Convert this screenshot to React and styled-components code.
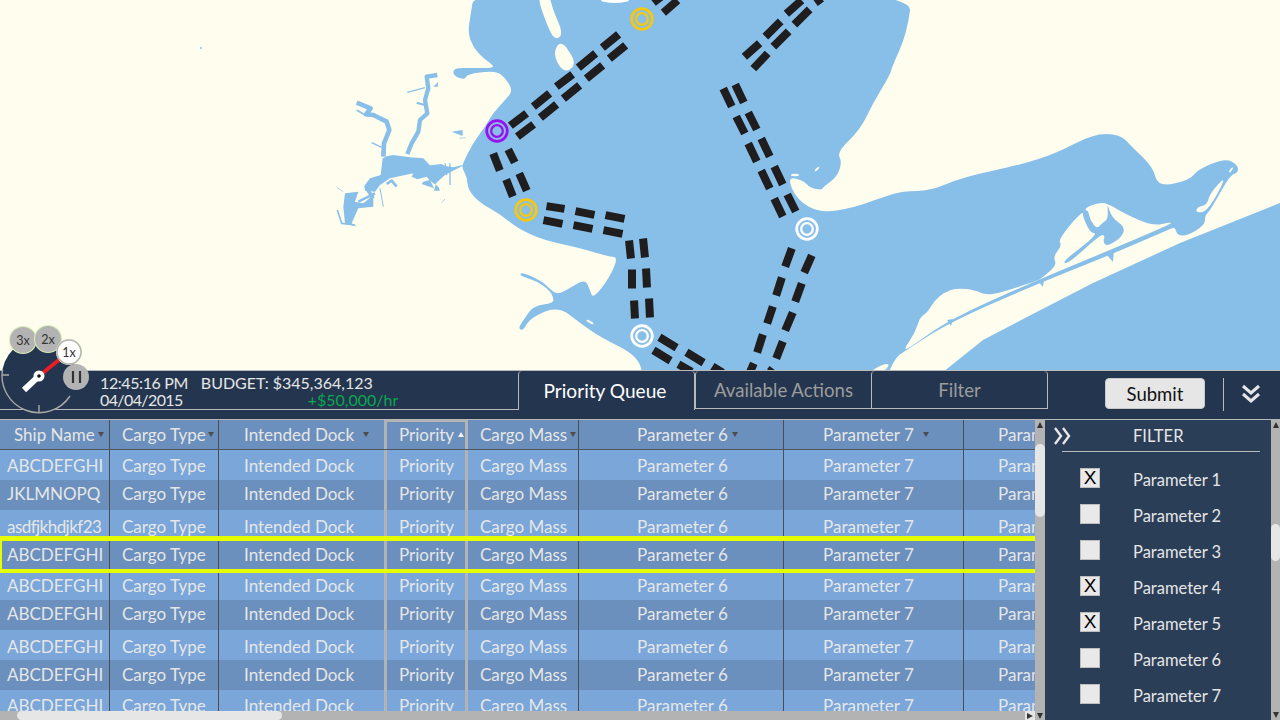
import React from "react";
import styled, { createGlobalStyle } from "styled-components";

const WATER = "#88bfe9";
const LAND = "#fffeee";
const BAR = "#24364f";

const GlobalStyle = createGlobalStyle`
  html, body { margin: 0; padding: 0; background: ${BAR}; }
  * { box-sizing: border-box; }
`;

const Page = styled.div`
  position: relative;
  width: 1280px;
  height: 720px;
  overflow: hidden;
  font-family: "Lato", "Liberation Sans", sans-serif;
`;

const MapArea = styled.div`
  height: 370px;
  background: ${LAND};
  overflow: hidden;
  svg { display: block; }
`;

const TopBar = styled.div`
  display: flex;
  height: 49px;
  background: ${BAR};
  border-top: 1px solid #b9b9b9;
`;

const Status = styled.div`
  width: 518px;
  height: 39px;
  padding: 3px 0 0 100px;
  border-bottom: 1px solid #b9b9b9;
  color: #e6e6e6;
  font-size: 16px;
  line-height: 17px;
`;

const StatusLine = styled.div`
  display: flex;
  gap: ${(p) => p.$gap}px;
`;

const Narrow = styled.span`
  letter-spacing: ${(p) => p.$by}px;
`;

const Green = styled.span`
  color: #0aa64f;
  margin-left: 112px;
`;

const Tabs = styled.div`
  display: flex;
  height: 38px;
`;

const Tab = styled.div`
  width: ${(p) => p.$w}px;
  height: ${(p) => (p.$active ? 39 : 38)}px;
  display: flex;
  align-items: center;
  justify-content: center;
  padding-right: ${(p) => (p.$active ? 3 : 0)}px;
  font-size: ${(p) => (p.$active ? 19.1 : 18.6)}px;
  color: ${(p) => (p.$active ? "#ffffff" : "#9c9c9c")};
  border-left: 1px solid #b9b9b9;
  border-right: ${(p) => (p.$last || p.$active ? "1px solid #b9b9b9" : "none")};
  border-bottom: ${(p) => (p.$active ? "none" : "1px solid #b9b9b9")};
  border-radius: 4px 4px 0 0;
`;

const Actions = styled.div`
  display: flex;
  align-items: center;
  flex: 1;
  padding: 0 0 3px 57px;
`;

const SubmitButton = styled.button`
  width: 100px;
  height: 31px;
  border: 1px solid #c9c9c9;
  border-radius: 4px;
  background: #e6e6e6;
  color: #111;
  font-family: inherit;
  font-size: 18.5px;
  padding: 0;
`;

const Divider = styled.div`
  width: 1px;
  height: 33px;
  margin: 2px 16px 0 18px;
  background: #b9b9b9;
`;

const Bottom = styled.div`
  display: flex;
  height: 301px;
`;

const TableSide = styled.div`
  width: 1045px;
  display: flex;
  flex-direction: column;
`;

const TableRow = styled.div`
  display: flex;
  height: 292px;
`;

const Viewport = styled.div`
  width: 1035px;
  height: 292px;
  overflow: hidden;
  border-top: 1px solid #b9b9b9;
`;

const Row = styled.div`
  position: relative;
  display: flex;
  width: 1130px;
  height: 30px;
  color: #e6e6e6;
  font-size: 17px;
  background: ${(p) => (p.$dark ? "#6b90bd" : "#7aa6da")};
  ${(p) =>
    p.$selected &&
    `z-index: 1;
    &::after {
      content: "";
      position: absolute;
      left: 0;
      right: 0;
      top: -4px;
      bottom: -3px;
      border: solid #e6ff00;
      border-width: 5px 0 4px 2px;
    }`}
`;

const HeadRow = styled(Row)`
  height: 30px;
  background: #6b90bd;
  border-bottom: 1px solid #4d5561;
`;

const Cell = styled.div`
  display: flex;
  align-items: center;
  flex: none;
  width: ${(p) => p.$w}px;
  padding-left: ${(p) => p.$pad}px;
  white-space: nowrap;
  border-right: ${(p) => (p.$line ? "1px solid #4d4d4d" : "none")};
  ${(p) => p.$priority && "border-left: 3px solid #b3b3b3; border-right: 3px solid #b3b3b3;"}
  ${(p) => p.$priority && p.$head && "border-top: 2px solid #b3b3b3; padding-bottom: 2px;"}
`;

const Label = styled.span`
  margin-top: ${(p) => (p.$shift || 0) * 2}px;
  letter-spacing: ${(p) => p.$spacing || 0}px;
`;

const Sort = styled.span`
  flex: none;
  width: 0;
  height: 0;
  margin-left: ${(p) => p.$gap}px;
  border-left: 3px solid transparent;
  border-right: 3px solid transparent;
  ${(p) =>
    p.$up
      ? "border-bottom: 5px solid #f2f2f2;"
      : "border-top: 5px solid #4c4c4c;"}
`;

const VScroll = styled.div`
  display: flex;
  flex-direction: column;
  flex: none;
  width: ${(p) => p.$w}px;
  height: ${(p) => p.$h}px;
  background: #b3b3b3;
`;

const Thumb = styled.div`
  width: 100%;
  height: ${(p) => p.$h}px;
  margin-top: ${(p) => p.$top}px;
  border-radius: 5px;
  background: #e6e6e6;
`;

const ArrowBox = styled.div`
  display: flex;
  align-items: center;
  justify-content: center;
  flex: none;
  width: ${(p) => p.$w || "100%"};
  height: 11px;
  margin-top: ${(p) => (p.$end ? "auto" : 0)};
  margin-left: ${(p) => (p.$push ? "auto" : 0)};
  background: ${(p) => p.$bg || "transparent"};
`;

const Triangle = styled.span`
  width: 0;
  height: 0;
  ${(p) =>
    p.$dir === "up" &&
    "border-left: 3px solid transparent; border-right: 3px solid transparent; border-bottom: 6px solid #333;"}
  ${(p) =>
    p.$dir === "down" &&
    "border-left: 3px solid transparent; border-right: 3px solid transparent; border-top: 6px solid #333;"}
  ${(p) =>
    p.$dir === "right" &&
    "border-top: 3px solid transparent; border-bottom: 3px solid transparent; border-left: 6px solid #333;"}
`;

const HScroll = styled.div`
  display: flex;
  align-items: center;
  width: 1045px;
  height: 9px;
  padding-left: 17px;
  background: #b3b3b3;
`;

const HThumb = styled.div`
  width: 265px;
  height: 9px;
  border-radius: 5px;
  background: #e6e6e6;
`;

const FilterPanel = styled.div`
  width: 226px;
  height: 301px;
  background: #2b3e57;
  border-top: 1px solid #b9b9b9;
  color: #e6e6e6;
  font-size: 16.5px;
`;

const FilterHead = styled.div`
  display: flex;
  align-items: center;
  height: 31px;
  margin: 0 11px 0 8px;
  svg { flex: none; }
`;

const FilterTitle = styled.span`
  margin-left: 60px;
`;

const Rule = styled.div`
  height: 1px;
  margin: 0 11px 0 17px;
  background: #b9b9b9;
`;

const FilterList = styled.div`
  display: flex;
  flex-direction: column;
  gap: 16px;
  padding: 16px 0 0 35px;
`;

const FilterItem = styled.div`
  display: flex;
  align-items: center;
  gap: 33px;
  height: 20px;
`;

const FilterName = styled.span`
  margin-top: 4px;
`;

const Check = styled.div`
  display: flex;
  align-items: center;
  justify-content: center;
  width: 20px;
  height: 20px;
  border: 1px solid #bdbdbd;
  background: #e9e9e9;
  color: #000;
  font-family: "Liberation Sans", sans-serif;
  font-size: 19px;
  line-height: 20px;
`;

const DialWrap = styled.div`
  position: absolute;
  left: 0;
  top: 322px;
  width: 92px;
  height: 96px;
  svg { display: block; overflow: visible; }
`;

const columns = [
  { name: "Ship Name", w: 110, head: 14, pad: 7, gap: 3, line: true },
  { name: "Cargo Type", w: 109, head: 12, pad: 12, gap: 2, line: true },
  { name: "Intended Dock", w: 165, head: 25, pad: 25, gap: 9 },
  { name: "Priority", w: 84, head: 12, pad: 12, gap: 4, up: true, priority: true },
  { name: "Cargo Mass", w: 111, head: 12, pad: 12, gap: 3, line: true },
  { name: "Parameter 6", w: 205, head: 58, pad: 58, gap: 4, line: true },
  { name: "Parameter 7", w: 180, head: 39, pad: 39, gap: 9, line: true },
  { name: "Parameter 8", w: 166, head: 34, pad: 34, line: true },
];

const rows = [
  { ship: "ABCDEFGHI", shift: 0 },
  { ship: "JKLMNOPQ", shift: -2 },
  { ship: "asdfjkhdjkf23", shift: 1, spacing: -0.55 },
  { ship: "ABCDEFGHI", shift: -1, selected: true },
  { ship: "ABCDEFGHI", shift: 0 },
  { ship: "ABCDEFGHI", shift: -2 },
  { ship: "ABCDEFGHI", shift: 1 },
  { ship: "ABCDEFGHI", shift: -1 },
  { ship: "ABCDEFGHI", shift: 0 },
];

const filters = [
  { name: "Parameter 1", on: true },
  { name: "Parameter 2" },
  { name: "Parameter 3" },
  { name: "Parameter 4", on: true },
  { name: "Parameter 5", on: true },
  { name: "Parameter 6" },
  { name: "Parameter 7" },
];

// route dashes, x1 y1 x2 y2
const dashes = [
  [510,126,527,113],[533,107,550,93],[556,87,573,74],[578,68,596,53],[602,48,619,34],
  [517,137,534,124],[540,118,557,104],[563,99,580,85],[586,79,603,65],[609,59,626,45],
  [653,3,662,-4],[663,13,678,0],
  [493,153,500,171],[508,149,515,163],[506,179,513,197],[519,173,527,191],
  [546,206,565,209],[575,211,595,215],[605,215,625,219],
  [543,220,563,224],[573,225,593,229],[603,230,623,234],
  [629,240,631,259],[632,269,632,289],[634,300,635,319],
  [643,238,645,258],[646,268,647,288],[649,298,650,318],
  [659,337,677,348],[686,352,704,363],[712,366,723,373],
  [653,350,671,361],[678,364,692,372],
  [792,248,785,267],[782,277,776,296],[773,306,767,324],[763,334,757,353],[754,363,750,372],
  [812,255,804,273],[802,283,795,302],[793,312,785,331],[783,341,776,359],[773,368,770,372],
  [735,84,744,103],[723,88,732,107],[748,112,757,130],[736,116,745,134],
  [761,138,770,157],[748,143,757,162],[774,166,783,185],[761,170,770,189],
  [787,194,796,212],[774,198,783,217],
  [744,57,760,43],[765,37,781,21],[786,14,802,0],
  [753,69,768,53],[773,47,789,31],[794,25,810,9],[815,3,822,-2],
];

const nodes = [
  { x: 642, y: 19, c: "#f7c80f" },
  { x: 497, y: 131, c: "#9b10ee" },
  { x: 526, y: 210, c: "#f7c80f" },
  { x: 807, y: 229, c: "#ffffff" },
  { x: 642, y: 336, c: "#ffffff" },
];

const BAY =
  "M475 -12L470 18L468 33L473 47L483 58L493 65L493 68L470 68L458 68L453 70L454 76L465 80L467 74L493 71L503 75L513 90L507 98L493 113L485 127L473 143L463 163L462 168L467 177L468 190L480 203L500 214L517 228L543 240L580 248L610 257L618 257L610 277L593 299L590 290L585 279L570 288L557 295L548 287L540 280L521 272L520 276L537 281L550 291L553 297L554 303L533 306L525 318L518 328L523 331L530 318L558 306L580 323L600 337L640 357L643 385L883 385L895 358L905 351L950 322L1042 282L1110 255L1170 229L1175 227L1177 235L1187 236L1205 225L1205 215L1210 211L1230 175L1238 173L1238 165L1225 158L1197 170L1190 180L1158 187L1153 167L1133 148L1120 134L1093 134L1057 153L1020 165L963 177L930 191L903 191L883 197L853 208L820 213L797 200L787 177L803 180L810 188L822 190L823 187L837 177L842 162L837 152L860 130L873 103L890 75L892 67L907 33L913 -12Z";
const GULF = "M1280 203L1180 243L1093 283L1027 317L983 340L943 372L1280 372Z";
const ISLAND =
  "M1171 222L1153 226L1125 214L1107 203L1097 203L1085 208L1086 213L1080 213L1058 240L1062 245L1053 257L1057 265L1042 278L1036 281L1000 293L985 295L975 290L957 288L945 292L935 300L927 313L920 317L915 333L904 349L908 349L950 319L1040 279L1110 250L1171 224Z";
const LAGOON =
  "M1107 203L1112 218L1125 227L1122 237L1108 246L1103 243L1105 235L1100 235L1068 264L1062 262L1087 243L1097 233L1090 233L1081 212L1088 209L1090 220L1097 229L1102 223L1107 220L1108 213Z";
const SHOALS = [
  "M536 -6L550 33L557 40L563 33L553 10L549 -6Z",
  "M557 45L554 55L560 68L568 72L576 63L567 48L562 43Z",
  "M1228 174L1210 193L1207 205L1197 207L1196 213L1208 211Z",
  "M876 368L884 364L890 364L884 372L870 372Z",
];
const TICKS = [
  "M947 320L953 319L951 326Z",
  "M1038 281L1044 279L1043 287Z",
  "M1106 254L1114 250L1113 262Z",
];

const RIVER_BODY = [
  "M397 315L370 322L345 318L335 312L300 316L280 295L240 292L190 285L172 288L158 295L152 345L120 355L103 378L105 392L135 395L150 375L180 355L250 340L245 350L262 358L290 350L300 362L325 380L330 392L312 392L318 370L345 345L397 318Z",
  "M365 215L398 210L398 228Z",
  "M310 80L325 65L323 80Z",
  "M280 365L300 360L312 385L275 372Z",
  "M45 400L85 395L75 425L100 430L130 405L130 440L85 445L65 490L80 500L45 490L40 440Z",
];

const RIVER = [
  { d: "M232 282L245 250L265 215L270 180L292 160L285 120L295 85L290 50L322 45", w: 13 },
  { d: "M232 97L285 83", w: 4 },
  { d: "M260 128L285 135", w: 6 },
  { d: "M160 290L162 250L178 210L170 185L130 165L108 163L122 145L80 128", w: 14 },
  { d: "M80 150L105 165", w: 5 },
  { d: "M125 248L155 262", w: 4 },
  { d: "M110 385L130 415", w: 11 },
  { d: "M85 425L135 400", w: 8 },
  { d: "M22 450L35 490L75 495", w: 5 },
  { d: "M20 382L40 395", w: 2 },
  { d: "M150 385L160 440", w: 3 },
  { d: "M170 372L185 362L200 380", w: 8 },
  { d: "M335 428L345 417", w: 2 },
  { d: "M345 310L350 345", w: 4 },
  { d: "M360 310L360 375", w: 4 },
  { d: "M388 235L407 233", w: 2 },
];

// rounds a polygon's corners so the coast doesn't look cut with scissors
const soften = (d) => {
  const n = d.match(/-?\d+(\.\d+)?/g).map(Number);
  const pts = [];
  for (let i = 0; i < n.length; i += 2) pts.push([n[i], n[i + 1]]);
  const mid = (a, b) => `${(a[0] + b[0]) / 2} ${(a[1] + b[1]) / 2}`;
  let out = `M${mid(pts[pts.length - 1], pts[0])}`;
  pts.forEach((p, i) => {
    out += `Q${p[0]} ${p[1]} ${mid(p, pts[(i + 1) % pts.length])}`;
  });
  return out + "Z";
};

const trim = ([x1, y1, x2, y2]) => {
  const k = 0.5 / Math.hypot(x2 - x1, y2 - y1);
  return [x1 + (x2 - x1) * k, y1 + (y2 - y1) * k, x2 - (x2 - x1) * k, y2 - (y2 - y1) * k];
};

const MapDrawing = () => (
  <svg width="1280" height="370" viewBox="0 0 1280 370">
    <path d={soften(BAY)} fill={WATER} />
    <path d={GULF} fill={WATER} />
    <path d={soften(ISLAND)} fill={LAND} />
    <path d={soften(LAGOON)} fill={WATER} />
    {SHOALS.map((d) => (
      <path key={d} d={soften(d)} fill={LAND} />
    ))}
    {TICKS.map((d) => (
      <path key={d} d={d} fill={WATER} />
    ))}
    <ellipse cx="615" cy="0" rx="14" ry="3" fill="#fff" />
    <ellipse cx="795" cy="175" rx="4" ry="1.2" fill={LAND} />
    <ellipse cx="817" cy="169" rx="3" ry="1" fill={LAND} transform="rotate(-45 817 169)" />
    <ellipse cx="1231" cy="170" rx="3" ry="1" fill={LAND} transform="rotate(-55 1231 170)" />
    <ellipse cx="590" cy="322" rx="4" ry="1.2" fill={LAND} transform="rotate(30 590 322)" />
    <circle cx="201" cy="48" r="1" fill={WATER} />
    <g transform="translate(330 60) scale(0.3333)" fill={WATER}>
      {RIVER_BODY.map((d) => (
        <path key={d} d={d} />
      ))}
      {RIVER.map((r) => (
        <path key={r.d} d={r.d} fill="none" stroke={WATER} strokeWidth={r.w} strokeLinejoin="round" />
      ))}
    </g>
    {dashes.map((seg) => {
      const [x1, y1, x2, y2] = trim(seg);
      return <line key={`${seg[0]}-${seg[1]}`} x1={x1} y1={y1} x2={x2} y2={y2} stroke="#1f1d1e" strokeWidth="8" />;
    })}
    {nodes.map((n) => (
      <g key={n.x} fill="none" stroke={n.c}>
        <circle cx={n.x} cy={n.y} r="10.3" strokeWidth="2.7" />
        <circle cx={n.x} cy={n.y} r="5.8" strokeWidth="2.3" />
      </g>
    ))}
  </svg>
);

const SpeedButton = ({ x, y, r, active, label }) => (
  <g>
    <circle cx={x} cy={y} r={r + 1} fill="#d9efb8" />
    <circle cx={x} cy={y} r={r} fill={active ? "#fff" : "#b3b3b3"} stroke="#b3b3b3" strokeWidth={active ? 1.5 : 0} />
    <text x={x} y={y + 4.5} textAnchor="middle" fontSize="12.5" fill="#333" fontFamily="Lato, sans-serif">
      {label}
    </text>
  </g>
);

// dial sits on top of the map edge and the bar
const SpeedDial = () => (
  <DialWrap>
    <svg width="92" height="96" viewBox="0 322 92 96">
      <circle cx="39" cy="376" r="37" fill={BAR} />
      <path d="M2.5 370A37 37 0 0 0 70 396" fill="none" stroke="#a9a9a9" strokeWidth="1.4" />
      <path d="M2 375H9M39 405V413" stroke="#a9a9a9" strokeWidth="1.4" />
      <line x1="39" y1="376" x2="60" y2="359" stroke="#ee1c25" strokeWidth="3.6" />
      <line x1="39" y1="376" x2="24" y2="390" stroke="#fff" strokeWidth="6" />
      <circle cx="39" cy="376" r="5.5" fill="#fff" />
      <circle cx="39" cy="376" r="1.8" fill="#111" />
      <SpeedButton x={23} y={340} r={13} label="3x" />
      <SpeedButton x={48} y={339} r={13} label="2x" />
      <SpeedButton x={69} y={352} r={12} label="1x" active />
      <circle cx="76" cy="377" r="13" fill="#b3b3b3" />
      <path d="M73 371V383M80 371V383" stroke="#333" strokeWidth="2.2" />
    </svg>
  </DialWrap>
);

const App = () => (
  <>
    <GlobalStyle />
    <Page>
      <MapArea>
        <MapDrawing />
      </MapArea>
      <TopBar>
        <Status>
          <StatusLine $gap={13}>
            <Narrow $by={-0.4}>12:45:16 PM</Narrow>
            <span>BUDGET: $345,364,123</span>
          </StatusLine>
          <StatusLine $gap={13}>
            <Narrow $by={-0.6}>04/04/2015</Narrow>
            <Green>+$50,000/hr</Green>
          </StatusLine>
        </Status>
        <Tabs>
          <Tab $w={177} $active>Priority Queue</Tab>
          <Tab $w={176}>Available Actions</Tab>
          <Tab $w={177} $last>Filter</Tab>
        </Tabs>
        <Actions>
          <SubmitButton>Submit</SubmitButton>
          <Divider />
          <svg width="22" height="20" viewBox="0 0 22 20" fill="none" stroke="#e6e6e6" strokeWidth="3">
            <path d="M3 2L11 9L19 2M3 10L11 17L19 10" />
          </svg>
        </Actions>
      </TopBar>
      <Bottom>
        <TableSide>
          <TableRow>
            <Viewport>
              <HeadRow>
                {columns.map((c) => (
                  <Cell key={c.name} $w={c.w} $pad={c.head} $line={c.line} $priority={c.priority} $head>
                    <Label>{c.name}</Label>
                    {c.gap && <Sort $gap={c.gap} $up={c.up} />}
                  </Cell>
                ))}
              </HeadRow>
              {rows.map((r, i) => (
                <Row key={i} $dark={i % 2 === 1} $selected={r.selected}>
                  {columns.map((c, j) => (
                    <Cell key={c.name} $w={c.w} $pad={c.pad} $line={c.line} $priority={c.priority}>
                      <Label $shift={r.shift} $spacing={j === 0 ? r.spacing : 0}>
                        {j === 0 ? r.ship : c.name}
                      </Label>
                    </Cell>
                  ))}
                </Row>
              ))}
            </Viewport>
            <VScroll $w={10} $h={292}>
              <ArrowBox><Triangle $dir="up" /></ArrowBox>
              <Thumb $top={14} $h={73} />
            </VScroll>
          </TableRow>
          <HScroll>
            <HThumb />
            <ArrowBox $w="10px" $bg="#e6e6e6" $push><Triangle $dir="right" /></ArrowBox>
            <ArrowBox $w="10px"><Triangle $dir="down" /></ArrowBox>
          </HScroll>
        </TableSide>
        <FilterPanel>
          <FilterHead>
            <svg width="20" height="18" viewBox="0 0 20 18" fill="none" stroke="#e6e6e6" strokeWidth="2.4">
              <path d="M2 1L8 9L2 17M10 1L16 9L10 17" />
            </svg>
            <FilterTitle>FILTER</FilterTitle>
          </FilterHead>
          <Rule />
          <FilterList>
            {filters.map((f) => (
              <FilterItem key={f.name}>
                <Check>{f.on ? "X" : ""}</Check>
                <FilterName>{f.name}</FilterName>
              </FilterItem>
            ))}
          </FilterList>
        </FilterPanel>
        <VScroll $w={9} $h={301}>
          <ArrowBox><Triangle $dir="up" /></ArrowBox>
          <Thumb $top={94} $h={37} />
          <ArrowBox $end><Triangle $dir="down" /></ArrowBox>
        </VScroll>
      </Bottom>
      <SpeedDial />
    </Page>
  </>
);

export default App;
